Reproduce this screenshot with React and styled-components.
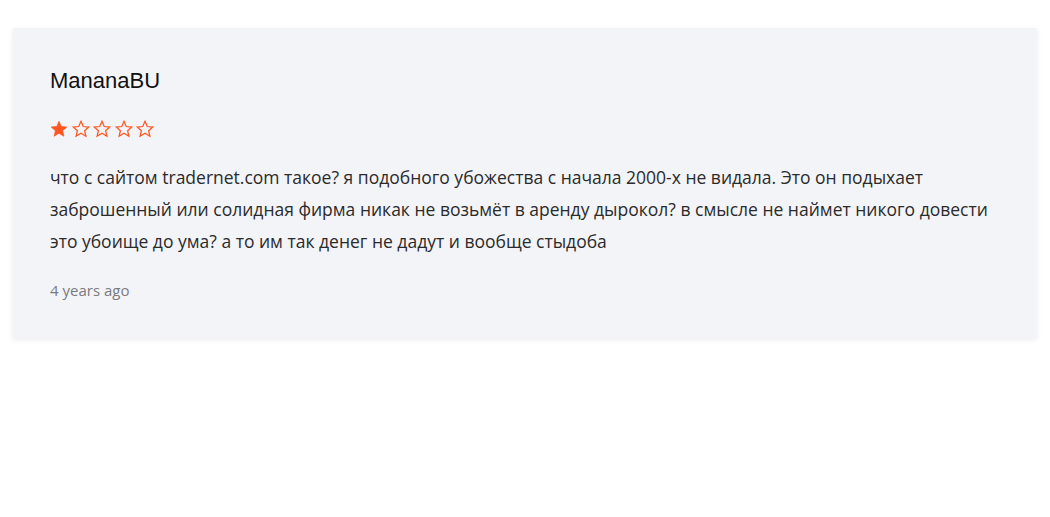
import styled, { createGlobalStyle } from "styled-components";

const GlobalStyle = createGlobalStyle`
  body {
    margin: 0;
    background: #fff;
    font-family: "Open Sans", "Liberation Sans", sans-serif;
  }
`;

const Page = styled.div`
  padding: 28px 13px;
`;

const Card = styled.div`
  background: #f3f4f8;
  box-shadow: 0 2px 6px rgba(0, 0, 0, 0.08);
  padding: 40px 37px 37px;
`;

const Author = styled.h3`
  margin: 0;
  font-family: "Liberation Sans", Arial, sans-serif;
  font-weight: 400;
  font-size: 22px;
  line-height: 26px;
  color: #111;
`;

const Stars = styled.div`
  display: flex;
  gap: 3.5px;
  margin-top: 26px;
`;

const Text = styled.p`
  margin: 23px 0 0;
  font-size: 17.5px;
  line-height: 32px;
  color: #2b2b2b;
`;

const Date = styled.div`
  margin-top: 22px;
  font-size: 15px;
  line-height: 22px;
  color: #7a7a80;
`;

const Star = ({ filled }) => (
  <svg width="18" height="18" viewBox="0 0 24 24">
    <path
      d="M12 1.8l3 6.9 7.4.7-5.6 4.9 1.7 7.3L12 17.7l-6.5 3.9 1.7-7.3-5.6-4.9 7.4-.7z"
      fill={filled ? "#ff5722" : "none"}
      stroke="#ff5722"
      strokeWidth={filled ? 1 : 1.7}
    />
  </svg>
);

const App = () => {
  return (
    <Page>
      <GlobalStyle />
      <Card>
        <Author>MananaBU</Author>
        <Stars>
          {[1, 2, 3, 4, 5].map((i) => (
            <Star key={i} filled={i <= 1} />
          ))}
        </Stars>
        <Text>
          что с сайтом tradernet.com такое? я подобного убожества с начала
          2000-х не видала. Это он подыхает заброшенный или солидная фирма
          никак не возьмёт в аренду дырокол? в смысле не наймет никого довести
          это убоище до ума? а то им так денег не дадут и вообще стыдоба
        </Text>
        <Date>4 years ago</Date>
      </Card>
    </Page>
  );
};

export default App;
